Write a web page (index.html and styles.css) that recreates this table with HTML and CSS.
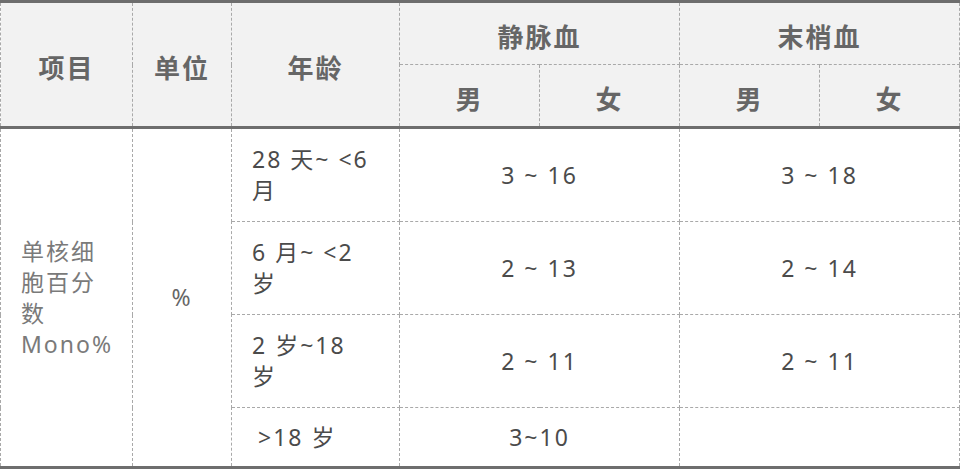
FILE: index.html
```html
<!DOCTYPE html>
<html lang="zh-CN">
<head>
<meta charset="utf-8">
<title>单核细胞百分数参考区间</title>
<link rel="stylesheet" href="styles.css">
</head>
<body>
<table class="ref">
  <colgroup>
    <col class="w-item">
    <col class="w-unit">
    <col class="w-age">
    <col class="w-val">
    <col class="w-val">
    <col class="w-val">
    <col class="w-val">
  </colgroup>
  <thead>
    <tr class="h1">
      <th rowspan="2">项目</th>
      <th rowspan="2">单位</th>
      <th rowspan="2">年龄</th>
      <th colspan="2">静脉血</th>
      <th colspan="2">末梢血</th>
    </tr>
    <tr class="h2">
      <th>男</th>
      <th>女</th>
      <th>男</th>
      <th>女</th>
    </tr>
  </thead>
  <tbody>
    <tr>
      <td rowspan="4" class="item">单核细胞百分数 Mono%</td>
      <td rowspan="4" class="unit">%</td>
      <td class="age">28 天~ &lt;6<br>月</td>
      <td colspan="2">3 ~ 16</td>
      <td colspan="2">3 ~ 18</td>
    </tr>
    <tr>
      <td class="age">6 月~ &lt;2<br>岁</td>
      <td colspan="2">2 ~ 13</td>
      <td colspan="2">2 ~ 14</td>
    </tr>
    <tr>
      <td class="age">2 岁~18<br>岁</td>
      <td colspan="2">2 ~ 11</td>
      <td colspan="2">2 ~ 11</td>
    </tr>
    <tr class="last">
      <td class="age gt">&gt;18 岁</td>
      <td colspan="2">3~10</td>
      <td colspan="2"></td>
    </tr>
  </tbody>
</table>
</body>
</html>
```

FILE: styles.css
```css
html, body {
  margin: 0;
  padding: 0;
  background: #ffffff;
}

body {
  font-family: "Noto Sans", "Noto Sans CJK SC", sans-serif;
}

.ref {
  border-collapse: collapse;
  table-layout: fixed;
  width: 959px;
  border-top: 3px solid #6e6e6e;
  border-bottom: 3px solid #6e6e6e;
}

.w-item { width: 132px; }
.w-unit { width: 99px; }
.w-age { width: 168px; }
.w-val { width: 140px; }

.ref th,
.ref td {
  border: 1px dashed #a9a9a9;
  padding: 0;
}

.ref thead th {
  background: #f2f2f2;
  color: #666666;
  font-weight: 700;
  font-size: 26px;
  letter-spacing: 2px;
  line-height: 30px;
  text-align: center;
  vertical-align: middle;
  padding-top: 6px;
}

.ref .h1 th { height: 55px; }
.ref .h2 th { height: 55px; }

.ref .h2 th,
.ref .h1 th[rowspan] {
  border-bottom: 3px solid #6e6e6e;
}

.ref td {
  font-size: 23px;
  letter-spacing: 2px;
  line-height: 31px;
  color: #4b4b4b;
  padding: 15px 20px 15px;
  text-align: center;
  vertical-align: middle;
}

.ref td.item {
  text-align: left;
  color: #7a7a7a;
}

.ref td.unit {
  color: #666666;
}

.ref td.age {
  text-align: left;
}

.ref td.gt {
  padding-left: 26px;
}

.ref .last td {
  padding-top: 14px;
  padding-bottom: 13px;
}
```
